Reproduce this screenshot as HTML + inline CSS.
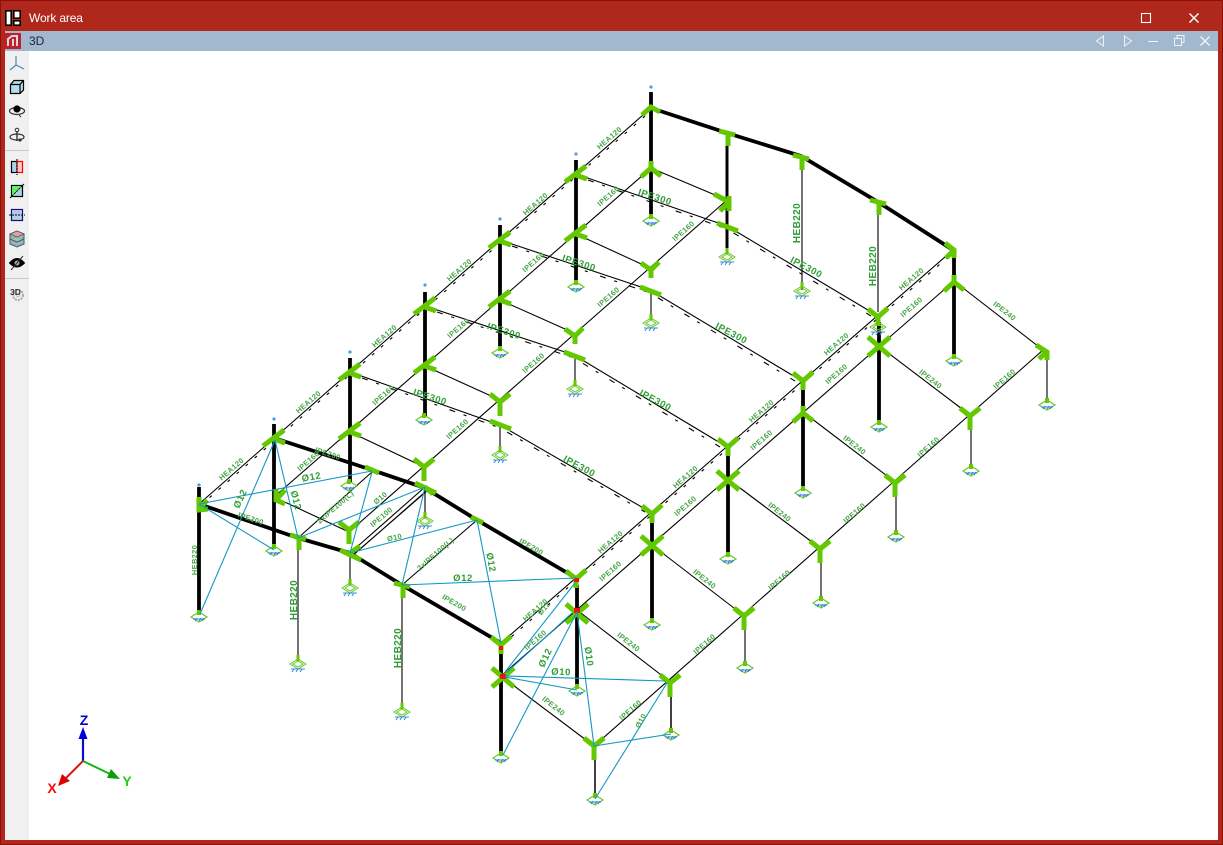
<!DOCTYPE html>
<html><head><meta charset="utf-8"><title>Work area</title>
<style>
html,body{margin:0;padding:0;background:#fff;overflow:hidden}
#w{position:relative;width:1223px;height:845px;background:#b0281c;overflow:hidden;font-family:"Liberation Sans",sans-serif}
#e{position:absolute;left:0;top:0;width:1221px;height:843px;border:1px solid #8e0f0a}
#t{position:absolute;left:29px;top:11px;color:#fff;font-size:12px;line-height:14px;letter-spacing:-.15px}
#b{position:absolute;left:5px;top:31px;width:1213px;height:20px;background:#a2b8cf}
#d{position:absolute;left:29px;top:34px;font-size:12px;line-height:14px;color:#1b2230}
#p{position:absolute;left:5px;top:51px;width:24px;height:789px;background:#f0f0f0}
#c{position:absolute;left:29px;top:51px;width:1189px;height:789px;background:#fff}
svg{position:absolute;left:0;top:0}
.s{fill:none;stroke:#000;stroke-width:1.1}
.k{fill:none;stroke:#000;stroke-width:3.8}
.h{fill:none;stroke:#000;stroke-width:3}
.bl{fill:none;stroke:#1398c6;stroke-width:1.1}
.g{fill:none;stroke:#63c800;stroke-width:5}
text.l{font-family:"Liberation Sans",sans-serif;font-weight:bold;fill:#46a646;font-size:7.5px;text-anchor:middle;letter-spacing:.3px}
text.m{font-family:"Liberation Sans",sans-serif;font-weight:bold;fill:#2f9f35;font-size:9.5px;text-anchor:middle;letter-spacing:.6px}
text.n{font-family:"Liberation Sans",sans-serif;font-weight:bold;fill:#2f9f35;font-size:10px;text-anchor:middle;letter-spacing:.4px}
</style></head><body>
<div id="w"><div id="e"></div><div id="t">Work area</div><div id="b"></div><div id="d">3D</div><div id="p"></div><div id="c"></div>
<svg width="1223" height="845" viewBox="0 0 1223 845">
<defs>
<g id="sp"><path d="M-8,1 L0,-4 L8,1 L0,6 Z M-5,1 L0,-2 L5,1 L0,4 Z" fill="none" stroke="#69c92c" stroke-width="1"/><path d="M-7,6 H7 M-6,9 L-4,6 M-2,9 L0,6 M2,9 L4,6" fill="none" stroke="#3b8fe0" stroke-width="1.1"/><path d="M0,-8 V-2" stroke="#63c800" stroke-width="3"/></g>
<g id="sq"><path d="M-8,1 L0,-4 L8,1 L0,6 Z" fill="none" stroke="#69c92c" stroke-width="1.2"/><path d="M-6,3 H6 M-4,5 L-2,2 M0,5 L2,2 M3,5 L5,2" fill="none" stroke="#2f80e0" stroke-width="1.1"/><path d="M0,-6 V-1" stroke="#63c800" stroke-width="4"/></g>
<path id="nX" class="g" d="M-11,7 L10,-9 M-3,-1 L11,4"/>
<path id="nC" class="g" d="M-11,-9 L11,10 M-11,10 L11,-9"/>
<path id="nY" class="g" d="M-10,-8 L0,0 L10,-8 M0,0 V14"/>
<path id="nE" class="g" d="M-10,-8 L0,0 L10,-9 M0,0 V9"/>
<path id="nS" class="g" d="M-9,-5 L1,2 L9,-6 M1,2 V10"/>
<path id="nT" class="g" d="M-8,-2 L8,2 M1,0 V13"/>
<path id="nM" class="g" d="M-9,5 L0,-3 L9,2"/>
<path id="nU" class="g" d="M-10,7 L0,-2 L10,6 M0,-2 V-9"/>
<path id="nF" class="g" d="M-10,-3 L11,5"/>
<path id="nL" class="g" d="M-8,-8 L7,0 M7,-6 V9 M-2,9 L7,0"/>
</defs>

<!-- toolbar icons -->
<g fill="none" stroke="#000">
<rect x="5.8" y="10.8" width="5.400" height="14.400" fill="#fff" stroke-width="1.600"/>
<rect x="13.800" y="10.800" width="6.400" height="7.400" fill="#fff" stroke-width="1.600"/>
<rect x="13.800" y="20.800" width="6.400" height="4.400" fill="#fff" stroke-width="1.600"/>
<rect x="5" y="33" width="16" height="16" fill="#c11f2e" stroke="none"/>
<path d="M8,46 V39 L12,36 H17 V46 M13,46 V39" stroke="#d9d9d9" stroke-width="2"/>
<path d="M16,56 V65 L10,70 M16,65 L24,69" stroke="#4f86a6" stroke-width="1.200"/>
<path d="M10.500,84.500 L14,80.500 H23.500 V90 L20,93.500 H10.500Z" fill="#b5dcec" stroke-width="1.200"/><path d="M10.500,84.500 H20 V93.500 M20,84.500 L23.500,80.500" stroke-width="1.200"/>
<ellipse cx="17" cy="111" rx="7.500" ry="3.500" stroke="#333" stroke-width="1.200"/><circle cx="17" cy="109" r="3.600" fill="#000" stroke="none"/><path d="M19,115 l2,2" stroke="#333"/>
<ellipse cx="17" cy="137" rx="7" ry="3" stroke="#333" stroke-width="1.200"/><path d="M17,131V141" stroke="#333" stroke-width="1.400"/><circle cx="17" cy="130" r="1.800" stroke="#333"/><circle cx="20" cy="140" r="1.600" fill="#333" stroke="none"/>
<path d="M5,150.500H29 M5,278.500H29" stroke="#c8c8c8"/>
<rect x="11.500" y="161.500" width="5.500" height="11" fill="#aad3ea" stroke-width="1.200"/><rect x="17" y="161.500" width="5.500" height="11" fill="#ffc6c6" stroke="#f00" stroke-width="1.200"/><path d="M17,159V175" stroke-dasharray="2 1" stroke-width="1.100"/>
<rect x="11.500" y="185.500" width="11" height="11" fill="#aad3ea" stroke-width="1.200"/><path d="M12,186h10l-10,10z" fill="#5ff05f" stroke="none"/><path d="M10,198L24,184" stroke-dasharray="2 1"/>
<rect x="11.500" y="209.500" width="11" height="11" fill="#aad3ea" stroke="#101070" stroke-width="1.200"/><rect x="12" y="210" width="10" height="5" fill="#bdbdf0" stroke="none"/><path d="M9,215H25" stroke-dasharray="2 1"/>
<path d="M10,234 L17,231 L24,234 V244 L17,247 L10,244Z" fill="#8fb6c6" stroke="#555"/><path d="M10,234 L17,237 L24,234 L17,231Z" fill="#e7a0a0" stroke="#555" stroke-width=".8"/><path d="M10,239 L17,242 L24,239" fill="#a4cf8e" stroke="#555"/>
<path d="M9.500,263 Q17,254 24.500,263 Q17,271 9.500,263Z" fill="#000" stroke="#000"/><circle cx="17" cy="263" r="2.500" fill="#aaa" stroke="none"/><path d="M11,270 L23,256" stroke="#333"/>
<circle cx="18" cy="295" r="5" stroke="#a9a9a9" stroke-width="2" stroke-dasharray="2 1"/><circle cx="18" cy="295" r="1.800" stroke="#bbb"/>
</g>
<text x="10" y="295" font-family="Liberation Sans" font-weight="bold" font-size="8.500" fill="#333">3D</text>

<!-- window buttons -->
<g fill="none" stroke="#fff" stroke-width="1.100">
<rect x="1141.500" y="13.500" width="9" height="9"/>
<path d="M1189.500,13.500 L1198.500,22.500 M1198.500,13.500 L1189.500,22.500" stroke-width="1.400"/>
</g>
<g fill="none" stroke="#f0f4f8" stroke-width="1">
<path d="M1103.500,36 L1096.500,41 L1103.500,46 Z M1124.500,36 L1131.500,41 L1124.500,46 Z"/>
<path d="M1148,41.500H1158"/>
<path d="M1174.500,38.500h7v7h-7z M1177,38v-2.500h7v7h-2.500"/>
<path d="M1200.500,36.500 L1209.500,45.500 M1209.500,36.500 L1200.500,45.500" stroke-width="1.400"/>
</g>

<!-- thin members: eave lines -->
<path class="s" d="M199,504 L651,108 M274,497 L651,168 M349,532 L727,200 M501,643 L953,250 M501,676 L954,281"/>
<path class="s" stroke-dasharray="3 9" stroke-width="1" d="M200.500,505.500 L652.500,109.500 M502.500,644.500 L954.500,251.500"/>
<!-- interior cross beams -->
<path class="s" d="M274,497 L349,532 M350,432 L424,467 M425,366 L500,400 M500,300 L574,333 M576,234 L650,268 M651,168 L727,200"/>
<!-- frames with IPE300 -->
<path class="s" d="M350,372 L500,425 L652,513 M425,306 L574,355 L727,447 M500,240 L650,290 L802,381 M576,174 L727,226 L878,316"/>
<path class="s" stroke-dasharray="6 9 3 13" d="M362,378 L500,428 L645,512 M437,312 L574,358 L720,447 M512,246 L650,293 L795,381 M588,180 L727,229 L871,316"/>
<!-- outer -->
<path class="s" d="M954,281 L1043,350 L594,746 L501,676 M879,346 L970,415 M803,412 L895,482 M728,479 L820,548 M652,545 L743,615 M577,610 L669,681"/>
<!-- thin cols -->
<path class="s" d="M298,538V660 M402,585V708 M802,156V290 M878,202V312 M350,553V584 M425,487V517 M500,425V452 M575,355V386 M651,290V320 M1047,350V400 M971,415V466 M896,482V532 M821,548V598 M745,615V663"/>
<path fill="none" stroke="#000" stroke-width="1.500" d="M671,681V730 M595,746V795"/>
<!-- 2xIPE100 -->
<path class="s" d="M298,538 L372,472 M350,553 L425,487 M353,555 L428,490 M350,558 L425,492 M402,585 L477,520"/>

<!-- thick gables -->
<path class="k" d="M199,504 L298,538 L350,553 L402,585 L501,643 M274,438 L372,470 L425,488 L477,520 L576,578 M651,108 L727,133 L801,156 L878,202 L953,250"/>
<!-- thick columns -->
<path class="k" d="M199,487V610 M274,424V547 M350,358V482 M425,292V416 M500,225V350 M576,160V285 M651,92V218 M501,650V752 M577,585V688 M652,520V622 M728,454V556 M803,388V490 M879,322V425 M954,257V358"/>
<path class="h" d="M727,133V253"/>

<!-- tips -->
<g fill="#4a9be8"><circle cx="199" cy="485" r="1.600"/><circle cx="274" cy="419" r="1.600"/><circle cx="350" cy="352" r="1.600"/><circle cx="425" cy="285" r="1.600"/><circle cx="500" cy="219" r="1.600"/><circle cx="576" cy="154" r="1.600"/><circle cx="651" cy="87" r="1.600"/></g>

<!-- supports -->
<use href="#sq" x="199" y="616"/><use href="#sq" x="274" y="550"/><use href="#sq" x="349" y="485"/><use href="#sq" x="424" y="419"/><use href="#sq" x="500" y="352"/><use href="#sq" x="576" y="286"/><use href="#sq" x="651" y="220"/>
<use href="#sp" x="298" y="663"/><use href="#sp" x="402" y="711"/><use href="#sp" x="350" y="587"/><use href="#sp" x="425" y="520"/><use href="#sp" x="500" y="454"/><use href="#sp" x="575" y="388"/><use href="#sp" x="651" y="322"/><use href="#sp" x="727" y="256"/><use href="#sp" x="802" y="290"/><use href="#sp" x="878" y="326"/>
<use href="#sq" x="501" y="757"/><use href="#sq" x="577" y="690"/><use href="#sq" x="652" y="624"/><use href="#sq" x="728" y="558"/><use href="#sq" x="803" y="492"/><use href="#sq" x="879" y="426"/><use href="#sq" x="954" y="360"/>
<use href="#sq" x="1047" y="404"/><use href="#sq" x="971" y="470"/><use href="#sq" x="896" y="536"/><use href="#sq" x="821" y="602"/><use href="#sq" x="745" y="667"/><use href="#sq" x="671" y="734"/><use href="#sq" x="595" y="799"/>

<!-- nodes -->
<g>
<use href="#nM" x="651" y="110"/><use href="#nX" x="576" y="175"/><use href="#nX" x="500" y="241"/><use href="#nX" x="425" y="307"/><use href="#nX" x="350" y="373"/><use href="#nX" x="274" y="439"/>
<use href="#nU" x="651" y="170"/><use href="#nX" x="576" y="234"/><use href="#nX" x="500" y="300"/><use href="#nX" x="425" y="366"/><use href="#nX" x="350" y="432"/>
<path class="g" d="M276,489 V500 L285,504 M276,500 L285,490"/>
<path class="g" d="M199,497 V510 L208,509 M199,510 L207,500"/>
<use href="#nL" x="722" y="202"/><use href="#nS" x="650" y="268"/><use href="#nS" x="574" y="334"/><use href="#nY" x="500" y="402"/><use href="#nY" x="424" y="467"/><use href="#nY" x="349" y="530"/>
<use href="#nF" x="727" y="226"/><use href="#nF" x="650" y="290"/><use href="#nF" x="574" y="355"/><use href="#nF" x="500" y="424"/>
<path class="g" d="M415,483 L436,493 M425,487 L433,494"/>
<use href="#nT" x="727" y="133"/><use href="#nT" x="801" y="157"/><use href="#nT" x="878" y="202"/>
<use href="#nT" x="298" y="537"/><use href="#nT" x="402" y="585"/>
<path class="g" d="M340,550 L361,560 M350,553 L360,546"/>
<path class="g" d="M365,467 L379,473" stroke-width="3.500"/><path class="g" d="M471,517 L483,523" stroke-width="3"/>
<path class="g" d="M945,243 L954,250 V258 M946,258 L954,250"/>
<path class="g" d="M1036,345 L1047,352 V360 M1039,359 L1047,351"/>
<use href="#nU" x="954" y="284"/><use href="#nC" x="879" y="346"/><use href="#nU" x="803" y="415"/>
<use href="#nC" x="728" y="480"/><use href="#nC" x="652" y="545"/><use href="#nC" x="577" y="613"/><use href="#nC" x="503" y="677"/>
<use href="#nE" x="878" y="317"/><use href="#nE" x="803" y="381"/><use href="#nE" x="728" y="447"/><use href="#nE" x="652" y="514"/><use href="#nE" x="576" y="579"/><use href="#nE" x="501" y="645"/>
<use href="#nY" x="670" y="683"/><use href="#nY" x="594" y="746"/><use href="#nY" x="744" y="616"/><use href="#nY" x="820" y="549"/><use href="#nY" x="895" y="483"/><use href="#nY" x="970" y="416"/>
</g>
<!-- red -->
<g fill="#f01010"><rect x="574" y="578" width="5" height="4"/><rect x="574" y="608" width="6" height="5"/><rect x="499" y="646" width="4" height="4"/><rect x="500" y="674" width="6" height="5"/></g>

<!-- braces -->
<path class="bl" d="M199,504 L372,471 M199,504 L274,550 M275,440 L200,614 M275,440 L298,538 M298,538 L425,487 M372,472 L350,553 M350,553 L477,520 M425,487 L402,585 M402,585 L576,578 M477,520 L501,643 M575,583 L505,672 M577,612 L503,755 M572,613 L506,673 M505,677 L577,690 M505,676 L665,681 M577,612 L594,746 M594,746 L671,734 M667,683 L595,799"/>

<!-- labels: HEA120 -->
<g class="lab">
<text class="l" transform="translate(233,471) rotate(-41)">HEA120</text>
<text class="l" transform="translate(310,404) rotate(-41)">HEA120</text>
<text class="l" transform="translate(386,338) rotate(-41)">HEA120</text>
<text class="l" transform="translate(461,272) rotate(-41)">HEA120</text>
<text class="l" transform="translate(537,206) rotate(-41)">HEA120</text>
<text class="l" transform="translate(611,140) rotate(-41)">HEA120</text>
<text class="l" transform="translate(537,612) rotate(-41)">HEA120</text>
<text class="l" transform="translate(612,544) rotate(-41)">HEA120</text>
<text class="l" transform="translate(687,479) rotate(-41)">HEA120</text>
<text class="l" transform="translate(763,413) rotate(-41)">HEA120</text>
<text class="l" transform="translate(838,346) rotate(-41)">HEA120</text>
<text class="l" transform="translate(913,281) rotate(-41)">HEA120</text>
<!-- IPE160 -->
<text class="l" transform="translate(310,463) rotate(-41)">IPE160</text>
<text class="l" transform="translate(385,397) rotate(-41)">IPE160</text>
<text class="l" transform="translate(460,330) rotate(-41)">IPE160</text>
<text class="l" transform="translate(535,264) rotate(-41)">IPE160</text>
<text class="l" transform="translate(610,198) rotate(-41)">IPE160</text>
<text class="l" transform="translate(459,431) rotate(-41)">IPE160</text>
<text class="l" transform="translate(535,365) rotate(-41)">IPE160</text>
<text class="l" transform="translate(610,299) rotate(-41)">IPE160</text>
<text class="l" transform="translate(685,233) rotate(-41)">IPE160</text>
<text class="l" transform="translate(537,642) rotate(-41)">IPE160</text>
<text class="l" transform="translate(612,573) rotate(-41)">IPE160</text>
<text class="l" transform="translate(687,508) rotate(-41)">IPE160</text>
<text class="l" transform="translate(763,442) rotate(-41)">IPE160</text>
<text class="l" transform="translate(838,376) rotate(-41)">IPE160</text>
<text class="l" transform="translate(913,309) rotate(-41)">IPE160</text>
<text class="l" transform="translate(1006,381) rotate(-41)">IPE160</text>
<text class="l" transform="translate(930,449) rotate(-41)">IPE160</text>
<text class="l" transform="translate(856,515) rotate(-41)">IPE160</text>
<text class="l" transform="translate(781,582) rotate(-41)">IPE160</text>
<text class="l" transform="translate(706,646) rotate(-41)">IPE160</text>
<text class="l" transform="translate(632,712) rotate(-41)">IPE160</text>
<!-- IPE240 -->
<text class="l" transform="translate(1003,313) rotate(38)">IPE240</text>
<text class="l" transform="translate(929,381) rotate(38)">IPE240</text>
<text class="l" transform="translate(853,447) rotate(38)">IPE240</text>
<text class="l" transform="translate(778,514) rotate(38)">IPE240</text>
<text class="l" transform="translate(703,581) rotate(38)">IPE240</text>
<text class="l" transform="translate(627,644) rotate(38)">IPE240</text>
<text class="l" transform="translate(552,708) rotate(38)">IPE240</text>
<!-- IPE300 -->
<text class="m" transform="translate(654,200) rotate(18)">IPE300</text>
<text class="m" transform="translate(578,266) rotate(18)">IPE300</text>
<text class="m" transform="translate(503,334) rotate(18)">IPE300</text>
<text class="m" transform="translate(429,400) rotate(18)">IPE300</text>
<text class="m" transform="translate(805,270) rotate(28)">IPE300</text>
<text class="m" transform="translate(730,336) rotate(28)">IPE300</text>
<text class="m" transform="translate(654,403) rotate(28)">IPE300</text>
<text class="m" transform="translate(578,469) rotate(28)">IPE300</text>
<!-- IPE200 -->
<text class="l" transform="translate(250,521) rotate(18)">IPE200</text>
<text class="l" transform="translate(327,456) rotate(18)">IPE200</text>
<text class="l" transform="translate(453,605) rotate(30)">IPE200</text>
<text class="l" transform="translate(530,549) rotate(30)">IPE200</text>
<!-- HEB -->
<text class="l" transform="translate(197,560) rotate(-90)">HEB220</text>
<text class="n" transform="translate(297,600) rotate(-90)">HEB220</text>
<text class="n" transform="translate(401,648) rotate(-90)">HEB220</text>
<text class="n" transform="translate(800,223) rotate(-90)">HEB220</text>
<text class="n" transform="translate(876,266) rotate(-90)">HEB220</text>
<!-- diameters -->
<text class="m" transform="translate(243,500) rotate(-65)">Ø12</text>
<text class="m" transform="translate(312,480) rotate(-10)">Ø12</text>
<text class="m" transform="translate(293,501) rotate(75)">Ø12</text>
<text class="l" transform="translate(395,540) rotate(-12)">Ø10</text>
<text class="m" transform="translate(463,581)">Ø12</text>
<text class="m" transform="translate(488,563) rotate(80)">Ø12</text>
<text class="m" transform="translate(548,659) rotate(-65)">Ø12</text>
<text class="m" transform="translate(561,675) rotate(2)">Ø10</text>
<text class="m" transform="translate(586,657) rotate(82)">Ø10</text>
<text class="l" transform="translate(643,722) rotate(-62)">Ø10</text>
<text class="l" transform="translate(546,610) rotate(-50)">Ø12</text>
<text class="l" transform="translate(382,500) rotate(-40)">Ø10</text>
<text class="l" transform="translate(383,519) rotate(-40)">IPE100</text>
<text class="l" transform="translate(337,509) rotate(-41)">2xIPE100(L)</text>
<text class="l" transform="translate(437,556) rotate(-41)">2xIPE100(L)</text>
</g>

<!-- axes -->
<path d="M83,761 V736" stroke="#0a0ad0" stroke-width="2.200"/>
<path d="M83,727 L87.500,739 L78.500,739Z" fill="#0000d8"/>
<path d="M83,761 L110,774" stroke="#16b616" stroke-width="2"/>
<path d="M120,779 L107,778 L111,769Z" fill="#0c9c0c"/>
<path d="M83,761 L64,780" stroke="#e01414" stroke-width="2"/>
<path d="M58,786 L62,774 L70,781Z" fill="#e00000"/>
<text x="84" y="725" font-family="Liberation Sans" font-weight="bold" font-size="14" fill="#0000d0" text-anchor="middle">Z</text>
<text x="127" y="786" font-family="Liberation Sans" font-weight="bold" font-size="14" fill="#22cc22" text-anchor="middle">Y</text>
<text x="52" y="793" font-family="Liberation Sans" font-weight="bold" font-size="14" fill="#f01010" text-anchor="middle">X</text>
</svg>
</div>
</body></html>
